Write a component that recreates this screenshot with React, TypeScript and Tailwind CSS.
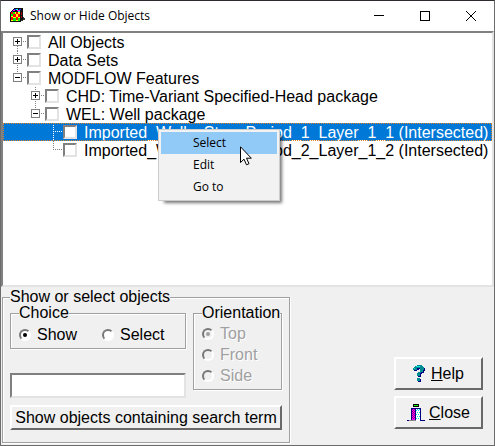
import React from "react";

const sunken =
  "border-2 border-t-[#808080] border-l-[#808080] border-b-[#e3e3e3] border-r-[#e3e3e3]";
const raised =
  "border-2 border-t-white border-l-white border-b-[#696969] border-r-[#696969]";
const group =
  "min-w-0 border border-[#a0a0a0] shadow-[1px_1px_0_#fff,inset_1px_1px_0_#fff]";
const legend = "h-4 bg-[#f0f0f0] leading-4";

type Row = { label: string; level: number; expander?: "plus" | "minus"; selected?: boolean };

const rows: Row[] = [
  { label: "All Objects", level: 0, expander: "plus" },
  { label: "Data Sets", level: 0, expander: "plus" },
  { label: "MODFLOW Features", level: 0, expander: "minus" },
  { label: "CHD: Time-Variant Specified-Head package", level: 1, expander: "plus" },
  { label: "WEL: Well package", level: 1, expander: "minus" },
  { label: "Imported_Wells_Step_Period_1_Layer_1_1 (Intersected)", level: 2, selected: true },
  { label: "Imported_Wells_Step_Period_2_Layer_1_2 (Intersected)", level: 2 },
];

const indent = ["pl-2", "pl-[26px]", "pl-[44px]"];

/* Dotted connectors and the expander box */
function Branch({ row, index }: { row: Row; index: number }) {
  const stroke = row.selected ? "#fff" : "#808080";
  const top = index === 0 ? 9 : 0;
  const ends = index === 2 || index === 4 || index === rows.length - 1;
  return (
    <svg width="16" height="18" viewBox="0 0 16 18" shapeRendering="crispEdges" className="shrink-0">
      <path d={`M6.5 ${top}V${ends ? 9 : 18}M6 8.5H16`} stroke={stroke} strokeDasharray="1 1" fill="none" />
      {row.expander && (
        <>
          <rect x="2.5" y="4.5" width="8" height="8" fill="#fff" stroke="#808080" />
          <path d={row.expander === "plus" ? "M4 8.5H9M6.5 6V11" : "M4 8.5H9"} stroke="#000" />
        </>
      )}
    </svg>
  );
}

function TreeRow({ row, index }: { row: Row; index: number }) {
  return (
    <label
      className={`flex h-[18px] items-center whitespace-nowrap ${indent[row.level]} ${
        row.selected
          ? "bg-[#0078d7] text-white outline-1 -outline-offset-1 outline-dotted outline-[#e08428]"
          : "text-black"
      }`}
    >
      <Branch row={row} index={index} />
      <input
        type="checkbox"
        className={`h-[14px] w-[14px] shrink-0 appearance-none bg-white ${sunken}`}
      />
      <span className="pt-px pl-[7px] leading-[18px]">{row.label}</span>
    </label>
  );
}

type RadioProps = { name: string; label: string; checked?: boolean; disabled?: boolean };

function Radio({ name, label, checked, disabled }: RadioProps) {
  return (
    <label
      className={`flex h-[21px] items-center gap-[6px] leading-[20px] ${
        disabled ? "text-[#a0a0a0] [text-shadow:1px_1px_0_#fff]" : "text-black"
      }`}
    >
      <span className="relative h-3 w-3 shrink-0">
        <input
          type="radio"
          name={name}
          defaultChecked={checked}
          disabled={disabled}
          className={`peer block h-3 w-3 appearance-none rounded-full border-2 border-t-[#777] border-l-[#777] border-r-white border-b-white ${
            disabled ? "bg-[#f0f0f0]" : "bg-white"
          }`}
        />
        <span
          className={`pointer-events-none absolute inset-1 hidden rounded-full peer-checked:block ${
            disabled ? "bg-[#a0a0a0]" : "bg-black"
          }`}
        />
      </span>
      {label}
    </label>
  );
}

function AppIcon() {
  return (
    <svg width="16" height="16" viewBox="0 0 16 16" shapeRendering="crispEdges">
      <path d="M0 4 4 0H13V11L10 14H0Z" fill="#111" />
      <path d="M4 1h2v1H4zM9 1h2v1H9zM2 3h1v1H2z" fill="#22f" />
      <path d="M6 1h2v1H6zM8 3h2v1H8z" fill="#0ff" />
      <path d="M7 2h3v1H7zM3 2h2v1H3z" fill="#f0f" />
      <path d="M1 4h9v9H1z" fill="#ff0" />
      <path d="M1 4h2v2H1zM6 4h2v2H6zM3 6h3v3H3zM8 6h2v3H8zM1 9h2v3H1zM6 9h2v3H6z" fill="#f00" />
      <path d="M3 4h2v2H3zM1 6h2v2H1zM3 10h3v3H3zM8 10h2v3H8z" fill="#0e0" />
      <path d="M11 4h1v3h-1zM11 8h1v2h-1z" fill="#a00" />
      <path d="M13 9h1v1h1v2h-2v1h-2v-1h2z" fill="#333" />
    </svg>
  );
}

function HelpIcon() {
  return (
    <svg width="12" height="17" viewBox="0 0 12 17" shapeRendering="crispEdges">
      <path d="M1 5V3H2V2H4V1H10V2H11V3H12V6H11V8H9V9H8V12H5V9H6V7H8V4H6V5H4V6H1Z" fill="#000080" />
      <path d="M0 5V3H1V2H2V1H4V0H9V1H10V2H11V5H10V7H8V8H7V11H4V8H5V7H7V3H4V5Z" fill="#008c91" />
      <path d="M5 14h3v3H5z" fill="#000080" />
      <path d="M4 13h3v3H4z" fill="#008c91" />
      <path d="M3 1h4v1H3zM1 3h1v1H1z" fill="#00e0e0" />
    </svg>
  );
}

function DoorIcon() {
  return (
    <svg width="18" height="18" viewBox="0 0 18 18" shapeRendering="crispEdges">
      <path d="M6 0h6v3H6z" fill="#000" />
      <path d="M7 1h4v1H7z" fill="#0f0" />
      <path d="M4 4h10v12h4v1H0v-1h4z" fill="#000080" />
      <path d="M5 5h3v11H5z" fill="#f0f" />
      <path d="M5 5h1v1H5zM7 5h1v1H7zM6 6h1v1H6zM5 7h1v1H5zM7 7h1v1H7zM6 8h1v1H6zM5 9h1v1H5zM7 9h1v1H7zM6 10h1v1H6zM5 11h1v1H5zM7 11h1v1H7zM6 12h1v1H6zM5 13h1v1H5zM7 13h1v1H7zM6 14h1v1H6z" fill="#808" />
      <path d="M9 5h4v12H9z" fill="#fff" />
      <path d="M10 5h1v1h-1zM12 5h1v1h-1zM9 6h1v1H9zM11 6h1v1h-1zM10 8h1v1h-1zM12 8h1v1h-1zM9 10h1v1H9zM11 10h1v1h-1zM10 12h1v1h-1zM12 12h1v1h-1zM9 14h1v1H9zM11 14h1v1h-1z" fill="#0dd" />
      <path d="M2 16h7v1H2z" fill="#888" />
    </svg>
  );
}

export default function App() {
  return (
    <main className="relative flex min-h-screen flex-col border border-[#6c6c6c] border-t-[#2f2b30] bg-[#f0f0f0] font-['Liberation_Sans',Arial,sans-serif] text-base">
      <header className="flex h-[30px] items-center bg-white pl-[9px] font-['Open_Sans','Noto_Sans',sans-serif] text-xs text-black">
        <AppIcon />
        <h1 className="flex-1 pl-1">Show or Hide Objects</h1>
        <button aria-label="Minimize" className="flex h-full w-[46px] items-center justify-center">
          <svg width="10" height="10" shapeRendering="crispEdges">
            <path d="M0 4.5H10" stroke="#000" />
          </svg>
        </button>
        <button aria-label="Maximize" className="flex h-full w-[46px] items-center justify-center">
          <svg width="10" height="10" shapeRendering="crispEdges">
            <path d="M.5.5h9v9h-9z" fill="none" stroke="#000" />
          </svg>
        </button>
        <button aria-label="Close window" className="flex h-full w-[46px] items-center justify-center">
          <svg width="10" height="10">
            <path d="M0 0 10 10M10 0 0 10" stroke="#000" />
          </svg>
        </button>
      </header>

      <section aria-label="Objects" className={`h-[256px] overflow-hidden bg-white ${sunken}`}>
        {rows.map((row, i) => (
          <TreeRow key={row.label} row={row} index={i} />
        ))}
      </section>

      <div className="flex flex-1 justify-between">
        <fieldset className={`mt-[2px] ml-px w-[288px] self-start px-[7px] pb-3 ${group}`}>
          <legend className={legend}>Show or select objects</legend>
          <div className="flex gap-[7px]">
            <div className="flex w-[176px] flex-col justify-between">
              <fieldset className={`h-11 px-2 ${group}`}>
                <legend className={legend}>Choice</legend>
                <div className="flex gap-[25px] pt-[3px]">
                  <Radio name="choice" label="Show" checked />
                  <Radio name="choice" label="Select" />
                </div>
              </fieldset>
              <input aria-label="Search term" className={`h-[25px] w-full bg-white px-1 ${sunken}`} />
            </div>
            <div className="h-[93px] w-[89px]">
              <fieldset className={`h-[85px] pt-[2px] pl-2 ${group}`}>
                <legend className={legend}>Orientation</legend>
                <Radio name="orientation" label="Top" checked disabled />
                <Radio name="orientation" label="Front" disabled />
                <Radio name="orientation" label="Side" disabled />
              </fieldset>
            </div>
          </div>
          <button className={`mt-[7px] flex h-[25px] w-full items-center justify-center whitespace-nowrap ${raised}`}>
            Show objects containing search term
          </button>
        </fieldset>
        <div className="flex flex-col justify-end gap-[6px] pr-[11px] pb-4">
          <button className={`flex h-[33px] w-[89px] items-center justify-center gap-[6px] ${raised}`}>
            <HelpIcon />
            <span>
              <u>H</u>elp
            </span>
          </button>
          <button className={`flex h-[33px] w-[89px] items-center justify-center gap-1 ${raised}`}>
            <DoorIcon />
            <span>
              <u>C</u>lose
            </span>
          </button>
        </div>
      </div>

      <div
        role="menu"
        className="absolute top-[128px] left-[157px] flex w-[122px] flex-col border border-[#ccc] bg-[#f2f2f2] p-[2px] font-['Open_Sans','Noto_Sans',sans-serif] text-xs text-black shadow-[4px_4px_3px_-2px_#0008]"
      >
        {["Select", "Edit", "Go to"].map((item, i) => (
          <button
            key={item}
            role="menuitem"
            className={`h-[22px] pl-8 text-left ${i === 0 ? "bg-[#91c9f7]" : ""}`}
          >
            {item}
          </button>
        ))}
      </div>
      <svg className="absolute top-[145px] left-[239px]" width="12" height="20" viewBox="0 0 12 20">
        <path d="M.5.8V16.5L4 13.2L6.5 18.8L9 17.7L6.5 12.2H11.3Z" fill="#fff" stroke="#000" />
      </svg>
    </main>
  );
}
